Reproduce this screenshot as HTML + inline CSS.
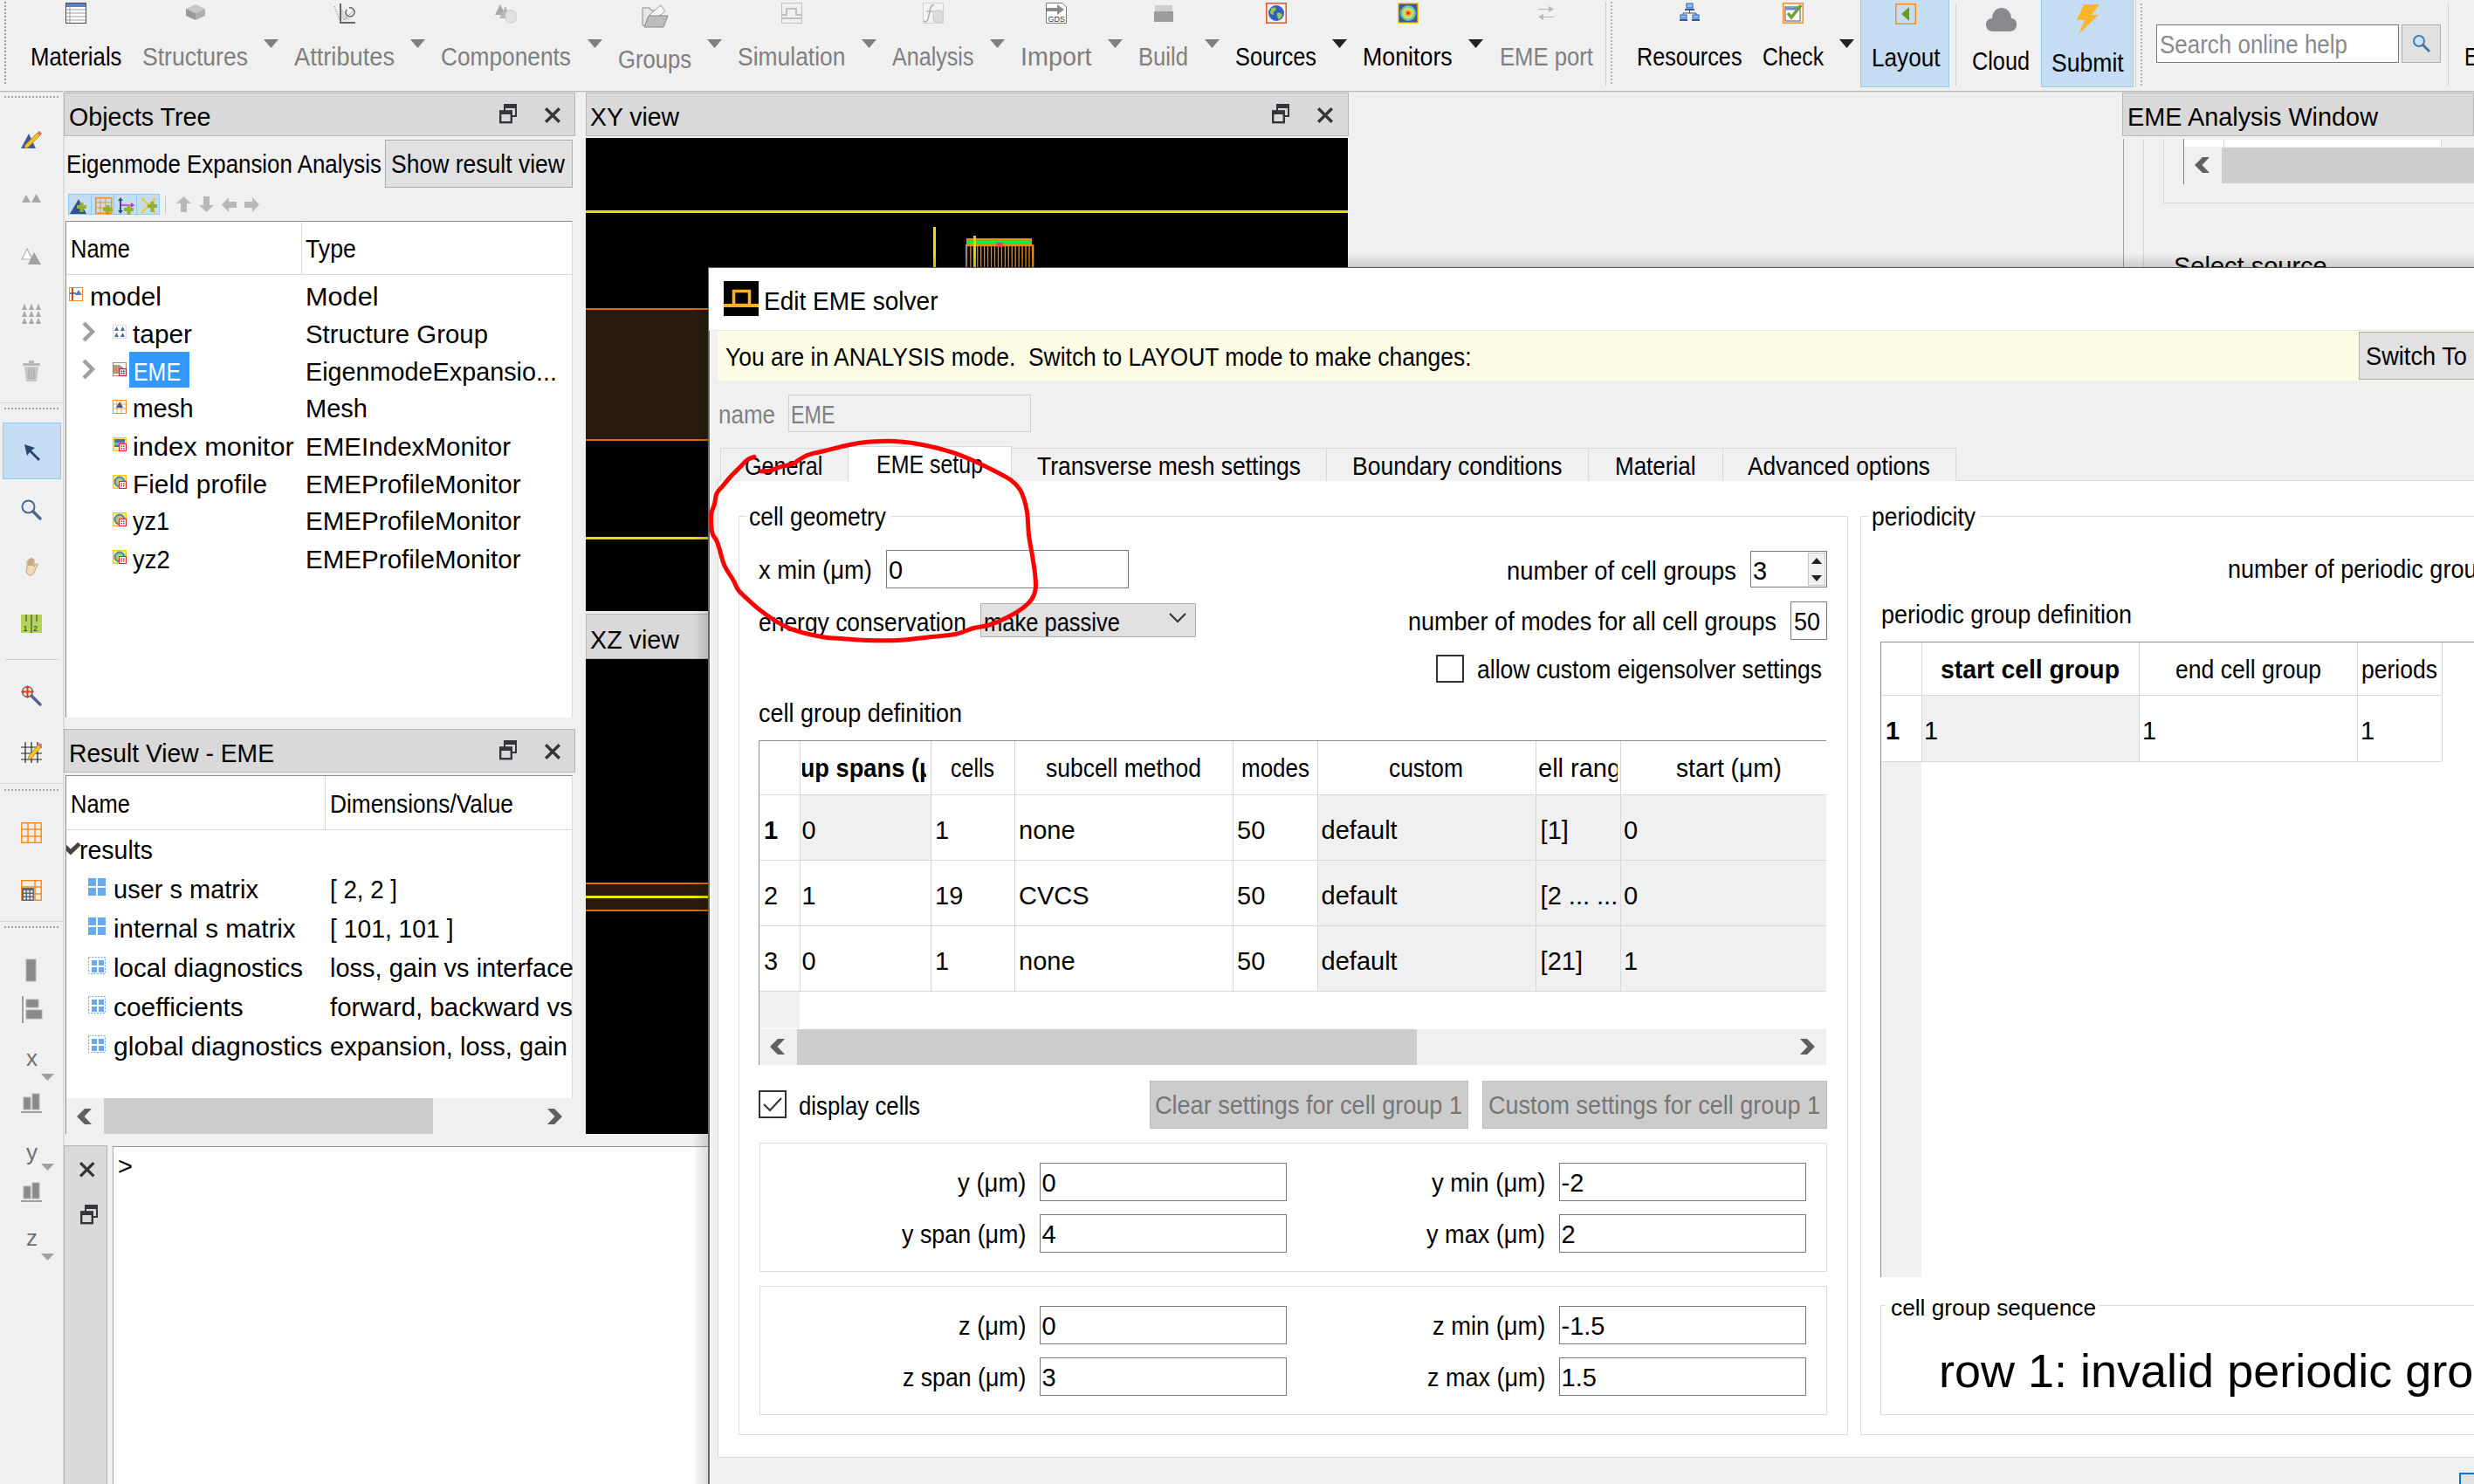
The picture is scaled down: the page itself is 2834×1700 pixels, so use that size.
<!DOCTYPE html>
<html><head><meta charset="utf-8"><title>Edit EME solver</title>
<style>
html,body{margin:0;padding:0;width:2834px;height:1700px;overflow:hidden;background:#f0f0f0;font-family:'Liberation Sans', sans-serif;}
.t{position:absolute;white-space:pre;line-height:1;transform-origin:0 0;}
div{box-sizing:border-box;}
svg{position:absolute;overflow:visible;}
</style></head><body>
<div style="position:absolute;left:0px;top:104px;width:2834px;height:1px;background:#b8b8b8"></div>
<div style="position:absolute;left:0px;top:105px;width:2834px;height:1px;background:#e0e0e0"></div>
<div style="position:absolute;left:5px;top:2px;width:2px;height:96px;background:repeating-linear-gradient(#a0a0a0 0 2px,transparent 2px 4px)"></div>
<div style="position:absolute;left:2131px;top:0px;width:102px;height:100px;background:#c4ddf2;border:1px solid #99c8f0;border-top:none"></div>
<div style="position:absolute;left:2338px;top:0px;width:106px;height:100px;background:#c4ddf2;border:1px solid #99c8f0;border-top:none"></div>
<div class="t" style="left:35.0px;top:50.9px;font-size:29px;color:#000;transform:scaleX(0.8882);">Materials</div>
<div class="t" style="left:163.0px;top:50.9px;font-size:29px;color:#7f7f7f;transform:scaleX(0.9155);">Structures</div>
<div class="t" style="left:337.0px;top:50.9px;font-size:29px;color:#7f7f7f;transform:scaleX(0.9388);">Attributes</div>
<div class="t" style="left:505.0px;top:50.9px;font-size:29px;color:#7f7f7f;transform:scaleX(0.9061);">Components</div>
<div class="t" style="left:707.5px;top:53.9px;font-size:29px;color:#7f7f7f;transform:scaleX(0.8832);">Groups</div>
<div class="t" style="left:845.0px;top:50.9px;font-size:29px;color:#7f7f7f;transform:scaleX(0.9121);">Simulation</div>
<div class="t" style="left:1022.0px;top:50.9px;font-size:29px;color:#7f7f7f;transform:scaleX(0.8657);">Analysis</div>
<div class="t" style="left:1169.0px;top:50.9px;font-size:29px;color:#7f7f7f;transform:scaleX(0.9916);">Import</div>
<div class="t" style="left:1304.0px;top:50.9px;font-size:29px;color:#7f7f7f;transform:scaleX(0.8837);">Build</div>
<div class="t" style="left:1414.6px;top:50.9px;font-size:29px;color:#000;transform:scaleX(0.8741);">Sources</div>
<div class="t" style="left:1561.0px;top:50.9px;font-size:29px;color:#000;transform:scaleX(0.9235);">Monitors</div>
<div class="t" style="left:1718.0px;top:50.9px;font-size:29px;color:#7f7f7f;transform:scaleX(0.8852);">EME port</div>
<div class="t" style="left:1874.5px;top:50.9px;font-size:29px;color:#000;transform:scaleX(0.8693);">Resources</div>
<div class="t" style="left:2019.0px;top:50.9px;font-size:29px;color:#000;transform:scaleX(0.8515);">Check</div>
<div class="t" style="left:2143.5px;top:51.9px;font-size:29px;color:#000;transform:scaleX(0.9015);">Layout</div>
<div class="t" style="left:2259.0px;top:56.4px;font-size:29px;color:#000;transform:scaleX(0.8709);">Cloud</div>
<div class="t" style="left:2350.0px;top:58.4px;font-size:29px;color:#000;transform:scaleX(0.9162);">Submit</div>
<div class="t" style="left:2823.0px;top:50.9px;font-size:29px;color:#000;transform:scaleX(0.8271);">E</div>
<svg style="left:302px;top:45px" width="17" height="10"><path d="M0 0H17L8.5 10Z" fill="#7f7f7f"/></svg>
<svg style="left:470px;top:45px" width="17" height="10"><path d="M0 0H17L8.5 10Z" fill="#7f7f7f"/></svg>
<svg style="left:672.6px;top:45px" width="17" height="10"><path d="M0 0H17L8.5 10Z" fill="#7f7f7f"/></svg>
<svg style="left:810px;top:45px" width="17" height="10"><path d="M0 0H17L8.5 10Z" fill="#7f7f7f"/></svg>
<svg style="left:987px;top:45px" width="17" height="10"><path d="M0 0H17L8.5 10Z" fill="#7f7f7f"/></svg>
<svg style="left:1134px;top:45px" width="17" height="10"><path d="M0 0H17L8.5 10Z" fill="#7f7f7f"/></svg>
<svg style="left:1269px;top:45px" width="17" height="10"><path d="M0 0H17L8.5 10Z" fill="#7f7f7f"/></svg>
<svg style="left:1380px;top:45px" width="17" height="10"><path d="M0 0H17L8.5 10Z" fill="#7f7f7f"/></svg>
<svg style="left:1525.6px;top:45px" width="17" height="10"><path d="M0 0H17L8.5 10Z" fill="#222"/></svg>
<svg style="left:1682px;top:45px" width="17" height="10"><path d="M0 0H17L8.5 10Z" fill="#222"/></svg>
<svg style="left:2106.6px;top:45px" width="17" height="10"><path d="M0 0H17L8.5 10Z" fill="#222"/></svg>
<div style="position:absolute;left:1839px;top:2px;width:1px;height:96px;background:#d0d0d0"></div>
<div style="position:absolute;left:1845px;top:2px;width:2px;height:96px;background:repeating-linear-gradient(#b0b0b0 0 2px,transparent 2px 4px)"></div>
<div style="position:absolute;left:2240px;top:4px;width:1px;height:94px;background:#d0d0d0"></div>
<div style="position:absolute;left:2446px;top:0px;width:1px;height:100px;background:#d0d0d0"></div>
<div style="position:absolute;left:2452px;top:4px;width:2px;height:94px;background:repeating-linear-gradient(#b0b0b0 0 2px,transparent 2px 4px)"></div>
<div style="position:absolute;left:2804px;top:4px;width:1px;height:94px;background:#d0d0d0"></div>
<div style="position:absolute;left:2470px;top:28px;width:278px;height:44px;background:#fff;border:1px solid #7a7a7a"></div>
<div class="t" style="left:2474.0px;top:37.4px;font-size:29px;color:#8a8a8a;transform:scaleX(0.8950);">Search online help</div>
<div style="position:absolute;left:2751px;top:28px;width:45px;height:44px;background:#e1e1e1;border:1px solid #adadad"></div>
<svg style="left:2762px;top:38px" width="24" height="24"><circle cx="9" cy="9" r="6" fill="#cfe3f7" stroke="#4a78b0" stroke-width="2"/><path d="M13 13L21 21" stroke="#4a6fa0" stroke-width="3"/></svg>
<div style="position:absolute;left:72px;top:104px;width:2px;height:1596px;background:#dcdcdc"></div>
<div style="position:absolute;left:73px;top:106px;width:586px;height:50px;background:#d9d9d9;border:1px solid #b8b8b8"></div>
<div class="t" style="left:79.0px;top:119.8px;font-size:29px;color:#000;transform:scaleX(0.9884);">Objects Tree</div>
<svg style="left:572px;top:119px" width="21" height="23"><rect x="6" y="1" width="13" height="13" fill="none" stroke="#333538" stroke-width="2"/><rect x="5" y="0" width="15" height="5" fill="#333538"/><rect x="1.2" y="8.6" width="12.6" height="12.6" fill="#dadada" stroke="#333538" stroke-width="2.4"/><rect x="0" y="7.4" width="15" height="4.6" fill="#333538"/></svg>
<svg style="left:622.5px;top:121.5px" width="20" height="20"><path d="M2.2 2.2L17.8 17.8M17.8 2.2L2.2 17.8" stroke="#333538" stroke-width="3.40"/></svg>
<div class="t" style="left:76.0px;top:173.8px;font-size:29px;color:#000;transform:scaleX(0.8921);">Eigenmode Expansion Analysis</div>
<div style="position:absolute;left:441px;top:160px;width:215px;height:55px;background:#e1e1e1;border:1px solid #adadad"></div>
<div class="t" style="left:448.0px;top:173.8px;font-size:29px;color:#000;transform:scaleX(0.9145);">Show result view</div>
<div style="position:absolute;left:75px;top:253px;width:581px;height:569px;background:#fff;border-left:1px solid #8e8e8e;border-top:1px solid #8e8e8e;border-right:1px solid #dcdcdc"></div>
<div style="position:absolute;left:76px;top:314px;width:580px;height:1px;background:#d8d8d8"></div>
<div style="position:absolute;left:345px;top:254px;width:1px;height:60px;background:#d8d8d8"></div>
<div class="t" style="left:81.0px;top:270.9px;font-size:29px;color:#000;transform:scaleX(0.8790);">Name</div>
<div class="t" style="left:350.0px;top:270.9px;font-size:29px;color:#000;transform:scaleX(0.9225);">Type</div>
<div style="position:absolute;left:148px;top:403px;width:69px;height:41px;background:#3399ff"></div>
<div class="t" style="left:102.6px;top:326.4px;font-size:29px;color:#000;transform:scaleX(1.0380);">model</div>
<div class="t" style="left:350.0px;top:326.4px;font-size:29px;color:#000;transform:scaleX(1.0570);">Model</div>
<div class="t" style="left:151.6px;top:369.1px;font-size:29px;color:#000;transform:scaleX(1.0286);">taper</div>
<div class="t" style="left:350.0px;top:369.1px;font-size:29px;color:#000;transform:scaleX(1.0129);">Structure Group</div>
<div class="t" style="left:153.2px;top:411.9px;font-size:29px;color:#fff;transform:scaleX(0.8593);">EME</div>
<div class="t" style="left:350.0px;top:411.9px;font-size:29px;color:#000;transform:scaleX(0.9925);">EigenmodeExpansio...</div>
<div class="t" style="left:152.0px;top:454.4px;font-size:29px;color:#000;transform:scaleX(0.9814);">mesh</div>
<div class="t" style="left:350.0px;top:454.4px;font-size:29px;color:#000;">Mesh</div>
<div class="t" style="left:152.0px;top:497.9px;font-size:29px;color:#000;transform:scaleX(1.0615);">index monitor</div>
<div class="t" style="left:350.0px;top:497.9px;font-size:29px;color:#000;transform:scaleX(1.0195);">EMEIndexMonitor</div>
<div class="t" style="left:152.0px;top:540.9px;font-size:29px;color:#000;transform:scaleX(1.0273);">Field profile</div>
<div class="t" style="left:350.0px;top:540.9px;font-size:29px;color:#000;transform:scaleX(1.0196);">EMEProfileMonitor</div>
<div class="t" style="left:152.0px;top:583.4px;font-size:29px;color:#000;transform:scaleX(0.9304);">yz1</div>
<div class="t" style="left:350.0px;top:583.4px;font-size:29px;color:#000;transform:scaleX(1.0196);">EMEProfileMonitor</div>
<div class="t" style="left:152.0px;top:626.5px;font-size:29px;color:#000;transform:scaleX(0.9459);">yz2</div>
<div class="t" style="left:350.0px;top:626.5px;font-size:29px;color:#000;transform:scaleX(1.0196);">EMEProfileMonitor</div>
<div style="position:absolute;left:73px;top:835px;width:586px;height:50px;background:#d9d9d9;border:1px solid #b8b8b8"></div>
<div class="t" style="left:79.0px;top:848.9px;font-size:29px;color:#000;transform:scaleX(0.9742);">Result View - EME</div>
<svg style="left:572px;top:848px" width="21" height="23"><rect x="6" y="1" width="13" height="13" fill="none" stroke="#333538" stroke-width="2"/><rect x="5" y="0" width="15" height="5" fill="#333538"/><rect x="1.2" y="8.6" width="12.6" height="12.6" fill="#dadada" stroke="#333538" stroke-width="2.4"/><rect x="0" y="7.4" width="15" height="4.6" fill="#333538"/></svg>
<svg style="left:623px;top:851px" width="20" height="20"><path d="M2.2 2.2L17.8 17.8M17.8 2.2L2.2 17.8" stroke="#333538" stroke-width="3.40"/></svg>
<div style="position:absolute;left:75px;top:888px;width:581px;height:411px;background:#fff;border-left:1px solid #8e8e8e;border-top:1px solid #8e8e8e;border-right:1px solid #dcdcdc"></div>
<div style="position:absolute;left:76px;top:950px;width:580px;height:1px;background:#d8d8d8"></div>
<div style="position:absolute;left:372px;top:889px;width:1px;height:61px;background:#d8d8d8"></div>
<div class="t" style="left:81.0px;top:906.9px;font-size:29px;color:#000;transform:scaleX(0.8790);">Name</div>
<div class="t" style="left:378.0px;top:906.9px;font-size:29px;color:#000;transform:scaleX(0.9068);">Dimensions/Value</div>
<div class="t" style="left:91.0px;top:959.9px;font-size:29px;color:#000;transform:scaleX(0.9834);">results</div>
<svg style="left:76px;top:963px;overflow:hidden" width="19" height="20"><path d="M-5 3.5L4.9 13L15 3.5" fill="none" stroke="#444" stroke-width="5"/></svg>
<div class="t" style="left:130.0px;top:1004.9px;font-size:29px;color:#000;">user s matrix</div>
<div style="position:absolute;left:372px;top:988px;width:284px;height:60px;overflow:hidden"><div style="position:absolute;left:-372px;top:-988px"><div class="t" style="left:378.0px;top:1004.9px;font-size:29px;color:#000;transform:scaleX(0.9552);">[ 2, 2 ]</div></div></div>
<div class="t" style="left:130.0px;top:1049.8px;font-size:29px;color:#000;transform:scaleX(1.0192);">internal s matrix</div>
<div style="position:absolute;left:372px;top:1033px;width:284px;height:60px;overflow:hidden"><div style="position:absolute;left:-372px;top:-1033px"><div class="t" style="left:378.0px;top:1049.8px;font-size:29px;color:#000;transform:scaleX(0.9750);">[ 101, 101 ]</div></div></div>
<div class="t" style="left:130.0px;top:1094.8px;font-size:29px;color:#000;transform:scaleX(1.0198);">local diagnostics</div>
<div style="position:absolute;left:372px;top:1078px;width:284px;height:60px;overflow:hidden"><div style="position:absolute;left:-372px;top:-1078px"><div class="t" style="left:378.0px;top:1094.8px;font-size:29px;color:#000;">loss, gain vs interface</div></div></div>
<div class="t" style="left:130.0px;top:1139.8px;font-size:29px;color:#000;transform:scaleX(1.0294);">coefficients</div>
<div style="position:absolute;left:372px;top:1123px;width:284px;height:60px;overflow:hidden"><div style="position:absolute;left:-372px;top:-1123px"><div class="t" style="left:378.0px;top:1139.8px;font-size:29px;color:#000;transform:scaleX(1.0146);">forward, backward vs</div></div></div>
<div class="t" style="left:130.0px;top:1184.8px;font-size:29px;color:#000;transform:scaleX(1.0384);">global diagnostics</div>
<div style="position:absolute;left:372px;top:1168px;width:284px;height:60px;overflow:hidden"><div style="position:absolute;left:-372px;top:-1168px"><div class="t" style="left:378.0px;top:1184.8px;font-size:29px;color:#000;transform:scaleX(1.0043);">expansion, loss, gain</div></div></div>
<div style="position:absolute;left:76px;top:1258px;width:580px;height:41px;background:#f0f0f0"></div>
<div style="position:absolute;left:119px;top:1258px;width:377px;height:41px;background:#cdcdcd"></div>
<svg style="left:88px;top:1270px" width="17" height="18"><path d="M17 0H9L0 9L9 18H17L8.5 9Z" fill="#606060"/></svg>
<svg style="left:627px;top:1270px" width="17" height="18"><path d="M0 0H8L17 9L8 18H0L8.5 9Z" fill="#606060"/></svg>
<div style="position:absolute;left:73px;top:1312px;width:50px;height:388px;background:#dadada;border:1px solid #b4b4b4;border-bottom:none"></div>
<svg style="left:89.5px;top:1329.5px" width="19.5" height="19.5"><path d="M2.145 2.145L17.355 17.355M17.355 2.145L2.145 17.355" stroke="#333538" stroke-width="3.32"/></svg>
<svg style="left:92px;top:1380px" width="21" height="23"><rect x="6" y="1" width="13" height="13" fill="none" stroke="#333538" stroke-width="2"/><rect x="5" y="0" width="15" height="5" fill="#333538"/><rect x="1.2" y="8.6" width="12.6" height="12.6" fill="#dadada" stroke="#333538" stroke-width="2.4"/><rect x="0" y="7.4" width="15" height="4.6" fill="#333538"/></svg>
<div style="position:absolute;left:129px;top:1313px;width:684px;height:387px;background:#fff;border-left:1px solid #a8a8a8;border-top:1px solid #959595"></div>
<div class="t" style="left:135.0px;top:1321.8px;font-size:29px;color:#000;">&gt;</div>
<div style="position:absolute;left:671px;top:106px;width:874px;height:50px;background:#d9d9d9;border:1px solid #b8b8b8"></div>
<div class="t" style="left:676.0px;top:119.8px;font-size:29px;color:#000;transform:scaleX(0.9786);">XY view</div>
<svg style="left:1457px;top:119px" width="21" height="23"><rect x="6" y="1" width="13" height="13" fill="none" stroke="#333538" stroke-width="2"/><rect x="5" y="0" width="15" height="5" fill="#333538"/><rect x="1.2" y="8.6" width="12.6" height="12.6" fill="#dadada" stroke="#333538" stroke-width="2.4"/><rect x="0" y="7.4" width="15" height="4.6" fill="#333538"/></svg>
<svg style="left:1507.5px;top:121.5px" width="20" height="20"><path d="M2.2 2.2L17.8 17.8M17.8 2.2L2.2 17.8" stroke="#333538" stroke-width="3.40"/></svg>
<div style="position:absolute;left:671px;top:158px;width:873px;height:542px;background:#000"></div>
<div style="position:absolute;left:671px;top:241px;width:873px;height:3px;background:#e8e000"></div>
<div style="position:absolute;left:671px;top:353px;width:142px;height:152px;background:#2a1b0e;border-top:2px solid #e0700e;border-bottom:2px solid #e0700e"></div>
<div style="position:absolute;left:671px;top:615px;width:142px;height:3px;background:#e8e000"></div>
<div style="position:absolute;left:1069px;top:260px;width:3px;height:47px;background:#e8e000"></div>
<svg style="left:1105px;top:272px" width="80" height="35"><rect x="2" y="1" width="75" height="2" fill="#ff8800"/><rect x="2" y="3" width="75" height="5" fill="#00f040"/><rect x="2" y="8" width="76" height="2.2" fill="#ff8800"/><rect x="6.20" y="10" width="1.3" height="25" fill="#ff8800"/><rect x="10.15" y="10" width="1.3" height="25" fill="#ff8800"/><rect x="14.10" y="10" width="1.3" height="25" fill="#ff8800"/><rect x="18.05" y="10" width="1.3" height="25" fill="#ff8800"/><rect x="22.00" y="10" width="1.3" height="25" fill="#ff8800"/><rect x="25.95" y="10" width="1.3" height="25" fill="#ff8800"/><rect x="29.90" y="10" width="1.3" height="25" fill="#ff8800"/><rect x="33.85" y="10" width="1.3" height="25" fill="#ff8800"/><rect x="37.80" y="10" width="1.3" height="25" fill="#ff8800"/><rect x="41.75" y="10" width="1.3" height="25" fill="#ff8800"/><rect x="45.70" y="10" width="1.3" height="25" fill="#ff8800"/><rect x="49.65" y="10" width="1.3" height="25" fill="#ff8800"/><rect x="53.60" y="10" width="1.3" height="25" fill="#ff8800"/><rect x="57.55" y="10" width="1.3" height="25" fill="#ff8800"/><rect x="61.50" y="10" width="1.3" height="25" fill="#ff8800"/><rect x="65.45" y="10" width="1.3" height="25" fill="#ff8800"/><rect x="69.40" y="10" width="1.3" height="25" fill="#ff8800"/><rect x="73.35" y="10" width="1.3" height="25" fill="#ff8800"/><rect x="77.30" y="10" width="1.3" height="25" fill="#ff8800"/><rect x="1.3" y="8" width="1" height="27" fill="#c0c8e8"/><rect x="78.3" y="8" width="1" height="27" fill="#c0c8e8"/><rect x="2.2" y="10" width="1" height="25" fill="#ff8800"/><rect x="77.2" y="10" width="1" height="25" fill="#ff8800"/><rect x="10.2" y="-2" width="2.7" height="37" fill="#e8e000"/><rect x="36.3" y="6.2" width="7.5" height="4.5" fill="#ff4050"/></svg>
<div style="position:absolute;left:671px;top:703px;width:142px;height:52px;background:#d9d9d9;border:1px solid #b8b8b8"></div>
<div class="t" style="left:676.0px;top:718.9px;font-size:29px;color:#000;transform:scaleX(0.9889);">XZ view</div>
<div style="position:absolute;left:671px;top:755px;width:142px;height:544px;background:#000"></div>
<div style="position:absolute;left:671px;top:1011px;width:142px;height:33px;background:#2a1b0e;border-top:2px solid #e0700e;border-bottom:2px solid #e0700e"></div>
<div style="position:absolute;left:671px;top:1026px;width:142px;height:3px;background:#f0e800"></div>
<div style="position:absolute;left:2431px;top:106px;width:403px;height:50px;background:#d9d9d9;border:1px solid #b8b8b8"></div>
<div class="t" style="left:2437.0px;top:119.8px;font-size:29px;color:#000;transform:scaleX(0.9948);">EME Analysis Window</div>
<div style="position:absolute;left:2432px;top:159px;width:402px;height:148px;border-left:1px solid #a0a0a0"></div>
<div style="position:absolute;left:2455px;top:159px;width:1px;height:148px;background:#d8d8d8"></div>
<div style="position:absolute;left:2478px;top:159px;width:356px;height:74px;border-left:1px solid #d8d8d8;border-bottom:1px solid #d8d8d8"></div>
<div style="position:absolute;left:2501px;top:159px;width:1px;height:52px;background:#808080"></div>
<div style="position:absolute;left:2502px;top:160px;width:295px;height:8px;background:#fff;border-right:1px solid #d8d8d8"></div>
<div style="position:absolute;left:2547px;top:160px;width:1px;height:8px;background:#d8d8d8"></div>
<div style="position:absolute;left:2545px;top:169px;width:289px;height:41px;background:#cdcdcd"></div>
<svg style="left:2514px;top:180px" width="17" height="18"><path d="M17 0H9L0 9L9 18H17L8.5 9Z" fill="#606060"/></svg>
<div style="position:absolute;left:2455px;top:280px;width:379px;height:26px;overflow:hidden"><div style="position:absolute;left:-2455px;top:-280px"><div class="t" style="left:2490.0px;top:290.9px;font-size:29px;color:#000;">Select source</div></div></div>
<div style="position:absolute;left:794px;top:290px;width:17px;height:1410px;background:linear-gradient(90deg, rgba(0,0,0,0), rgba(0,0,0,0.15))"></div>
<div style="position:absolute;left:811px;top:290px;width:2023px;height:16px;background:linear-gradient(rgba(0,0,0,0), rgba(0,0,0,0.15))"></div>
<div style="position:absolute;left:811px;top:306px;width:2023px;height:1394px;background:#f0f0f0;border-left:2px solid #666;border-top:1px solid #555"></div>
<div style="position:absolute;left:813px;top:307px;width:1px;height:1393px;background:#fff"></div>
<div style="position:absolute;left:812px;top:307px;width:2022px;height:71px;background:#fff"></div>
<div style="position:absolute;left:812px;top:378px;width:2022px;height:1px;background:#e6e6e6"></div>
<svg style="left:829px;top:322px" width="40" height="40"><rect width="40" height="40" fill="#000"/><rect x="11.5" y="11.5" width="18" height="16" fill="none" stroke="#ffb21c" stroke-width="3.5"/><rect x="0" y="26" width="40" height="4" fill="#ffb21c"/></svg>
<div class="t" style="left:875.0px;top:330.9px;font-size:29px;color:#000;transform:scaleX(0.9671);">Edit EME solver</div>
<div style="position:absolute;left:822px;top:379px;width:2012px;height:57px;background:#fdfde6"></div>
<div class="t" style="left:831.0px;top:394.9px;font-size:29px;color:#000;transform:scaleX(0.9119);">You are in ANALYSIS mode.  Switch to LAYOUT mode to make changes:</div>
<div style="position:absolute;left:2702px;top:380px;width:140px;height:55px;background:#e1e1e1;border:1px solid #adadad"></div>
<div class="t" style="left:2710.0px;top:393.9px;font-size:29px;color:#000;transform:scaleX(0.9387);">Switch To</div>
<div class="t" style="left:823.0px;top:460.5px;font-size:29px;color:#808080;transform:scaleX(0.8960);">name</div>
<div style="position:absolute;left:903px;top:452px;width:278px;height:43px;background:#f0f0f0;border:1px solid #cfcfcf"></div>
<div class="t" style="left:906.0px;top:460.5px;font-size:29px;color:#808080;transform:scaleX(0.8020);">EME</div>
<div style="position:absolute;left:822px;top:550px;width:2012px;height:1120px;background:#fff;border:1px solid #d9d9d9;border-right:none"></div>
<div style="position:absolute;left:825px;top:513px;width:147px;height:38px;background:#f0f0f0;border:1px solid #d9d9d9;border-bottom:none"></div>
<div class="t" style="left:853.3px;top:520.2px;font-size:29px;color:#000;transform:scaleX(0.8665);">General</div>
<div style="position:absolute;left:1158px;top:513px;width:362px;height:38px;background:#f0f0f0;border:1px solid #d9d9d9;border-bottom:none"></div>
<div class="t" style="left:1187.5px;top:520.2px;font-size:29px;color:#000;transform:scaleX(0.9126);">Transverse mesh settings</div>
<div style="position:absolute;left:1519px;top:513px;width:301px;height:38px;background:#f0f0f0;border:1px solid #d9d9d9;border-bottom:none"></div>
<div class="t" style="left:1548.8px;top:520.2px;font-size:29px;color:#000;transform:scaleX(0.9152);">Boundary conditions</div>
<div style="position:absolute;left:1819px;top:513px;width:155px;height:38px;background:#f0f0f0;border:1px solid #d9d9d9;border-bottom:none"></div>
<div class="t" style="left:1849.8px;top:520.2px;font-size:29px;color:#000;transform:scaleX(0.8967);">Material</div>
<div style="position:absolute;left:1973px;top:513px;width:268px;height:38px;background:#f0f0f0;border:1px solid #d9d9d9;border-bottom:none"></div>
<div class="t" style="left:2002.0px;top:520.2px;font-size:29px;color:#000;transform:scaleX(0.9065);">Advanced options</div>
<div style="position:absolute;left:971px;top:511px;width:188px;height:41px;background:#fff;border:1px solid #d9d9d9;border-bottom:none"></div>
<div class="t" style="left:1004.0px;top:517.6px;font-size:29px;color:#000;transform:scaleX(0.8601);">EME setup</div>
<div style="position:absolute;left:846px;top:591px;width:1271px;height:1053px;border:1px solid #dcdcdc"></div>
<div style="position:absolute;left:855px;top:580px;width:166px;height:20px;background:#fff"></div>
<div class="t" style="left:858.0px;top:577.9px;font-size:29px;color:#000;transform:scaleX(0.9103);">cell geometry</div>
<div class="t" style="left:869.0px;top:638.9px;font-size:29px;color:#000;transform:scaleX(0.9452);">x min (μm)</div>
<div style="position:absolute;left:1015px;top:630px;width:278px;height:44px;background:#fff;border:1px solid #7a7a7a"></div>
<div class="t" style="left:1018.0px;top:638.9px;font-size:29px;color:#000;">0</div>
<div class="t" style="left:1726.0px;top:639.9px;font-size:29px;color:#000;transform:scaleX(0.9431);">number of cell groups</div>
<div style="position:absolute;left:2005px;top:631px;width:88px;height:42px;background:#fff;border:1px solid #7a7a7a"></div>
<div class="t" style="left:2008.0px;top:639.9px;font-size:29px;color:#000;">3</div>
<div style="position:absolute;left:2071px;top:633px;width:20px;height:38px;background:#f0f0f0;border:1px solid #c8c8c8"></div>
<svg style="left:2074px;top:638px" width="14" height="30"><path d="M1 8L7 1L13 8Z M1 21L13 21L7 28Z" fill="#222"/></svg>
<div class="t" style="left:869.0px;top:698.9px;font-size:29px;color:#000;transform:scaleX(0.9113);">energy conservation</div>
<div style="position:absolute;left:1123px;top:691px;width:247px;height:39px;background:#e1e1e1;border:1px solid #adadad"></div>
<div class="t" style="left:1127.0px;top:698.9px;font-size:29px;color:#000;transform:scaleX(0.8798);">make passive</div>
<svg style="left:1339px;top:702px" width="20" height="12"><path d="M1 1L10 10L19 1" fill="none" stroke="#333" stroke-width="2"/></svg>
<div class="t" style="left:1613.0px;top:697.9px;font-size:29px;color:#000;transform:scaleX(0.9317);">number of modes for all cell groups</div>
<div style="position:absolute;left:2051px;top:689px;width:42px;height:44px;background:#fff;border:1px solid #7a7a7a"></div>
<div class="t" style="left:2055.0px;top:697.9px;font-size:29px;color:#000;transform:scaleX(0.9298);">50</div>
<div style="position:absolute;left:1645px;top:750px;width:32px;height:32px;background:#fff;border:2px solid #333"></div>
<div class="t" style="left:1692.0px;top:752.9px;font-size:29px;color:#000;transform:scaleX(0.9144);">allow custom eigensolver settings</div>
<div class="t" style="left:869.0px;top:802.9px;font-size:29px;color:#000;transform:scaleX(0.9324);">cell group definition</div>
<div style="position:absolute;left:869px;top:848px;width:1223px;height:372px;background:#fff;border-left:1px solid #8e8e8e;border-top:1px solid #8e8e8e"></div>
<div style="position:absolute;left:916px;top:910px;width:150px;height:75px;background:#f0f0f0"></div>
<div style="position:absolute;left:1509px;top:910px;width:583px;height:225px;background:#f0f0f0"></div>
<div style="position:absolute;left:870px;top:1135px;width:46px;height:43px;background:#f0f0f0"></div>
<div style="position:absolute;left:870px;top:910px;width:1222px;height:1px;background:#d8d8d8"></div>
<div style="position:absolute;left:870px;top:985px;width:1222px;height:1px;background:#d8d8d8"></div>
<div style="position:absolute;left:870px;top:1060px;width:1222px;height:1px;background:#d8d8d8"></div>
<div style="position:absolute;left:870px;top:1135px;width:1222px;height:1px;background:#d8d8d8"></div>
<div style="position:absolute;left:915.5px;top:849px;width:1px;height:286px;background:#d8d8d8"></div>
<div style="position:absolute;left:1065.5px;top:849px;width:1px;height:286px;background:#d8d8d8"></div>
<div style="position:absolute;left:1162px;top:849px;width:1px;height:286px;background:#d8d8d8"></div>
<div style="position:absolute;left:1412px;top:849px;width:1px;height:286px;background:#d8d8d8"></div>
<div style="position:absolute;left:1509px;top:849px;width:1px;height:286px;background:#d8d8d8"></div>
<div style="position:absolute;left:1759px;top:849px;width:1px;height:286px;background:#d8d8d8"></div>
<div style="position:absolute;left:1856px;top:849px;width:1px;height:286px;background:#d8d8d8"></div>
<div style="position:absolute;left:919px;top:860px;width:142px;height:45px;overflow:hidden"><div style="position:absolute;left:-919px;top:-860px"><div class="t" style="left:899.5px;top:866.4px;font-size:29px;color:#000;font-weight:bold;transform:scaleX(0.9402);">oup spans (μm)</div></div></div>
<div class="t" style="left:1088.7px;top:866.4px;font-size:29px;color:#000;transform:scaleX(0.8618);">cells</div>
<div class="t" style="left:1198.0px;top:866.4px;font-size:29px;color:#000;transform:scaleX(0.9125);">subcell method</div>
<div class="t" style="left:1421.5px;top:866.4px;font-size:29px;color:#000;transform:scaleX(0.8961);">modes</div>
<div class="t" style="left:1590.5px;top:866.4px;font-size:29px;color:#000;transform:scaleX(0.9092);">custom</div>
<div style="position:absolute;left:1760px;top:860px;width:93px;height:45px;overflow:hidden"><div style="position:absolute;left:-1760px;top:-860px"><div class="t" style="left:1762.0px;top:866.4px;font-size:29px;color:#000;">ell range</div></div></div>
<div class="t" style="left:1919.5px;top:866.4px;font-size:29px;color:#000;transform:scaleX(0.9708);">start (μm)</div>
<div class="t" style="left:875.0px;top:936.9px;font-size:29px;color:#000;font-weight:bold;">1</div>
<div class="t" style="left:918.6px;top:936.9px;font-size:29px;color:#000;">0</div>
<div class="t" style="left:1071.0px;top:936.9px;font-size:29px;color:#000;">1</div>
<div class="t" style="left:1167.0px;top:936.9px;font-size:29px;color:#000;">none</div>
<div class="t" style="left:1417.0px;top:936.9px;font-size:29px;color:#000;">50</div>
<div class="t" style="left:1513.6px;top:936.9px;font-size:29px;color:#000;">default</div>
<div class="t" style="left:1764.6px;top:936.9px;font-size:29px;color:#000;">[1]</div>
<div class="t" style="left:1860.0px;top:936.9px;font-size:29px;color:#000;">0</div>
<div class="t" style="left:875.0px;top:1011.9px;font-size:29px;color:#000;">2</div>
<div class="t" style="left:918.6px;top:1011.9px;font-size:29px;color:#000;">1</div>
<div class="t" style="left:1071.0px;top:1011.9px;font-size:29px;color:#000;">19</div>
<div class="t" style="left:1167.0px;top:1011.9px;font-size:29px;color:#000;">CVCS</div>
<div class="t" style="left:1417.0px;top:1011.9px;font-size:29px;color:#000;">50</div>
<div class="t" style="left:1513.6px;top:1011.9px;font-size:29px;color:#000;">default</div>
<div class="t" style="left:1764.6px;top:1011.9px;font-size:29px;color:#000;">[2 ... ...</div>
<div class="t" style="left:1860.0px;top:1011.9px;font-size:29px;color:#000;">0</div>
<div class="t" style="left:875.0px;top:1086.8px;font-size:29px;color:#000;">3</div>
<div class="t" style="left:918.6px;top:1086.8px;font-size:29px;color:#000;">0</div>
<div class="t" style="left:1071.0px;top:1086.8px;font-size:29px;color:#000;">1</div>
<div class="t" style="left:1167.0px;top:1086.8px;font-size:29px;color:#000;">none</div>
<div class="t" style="left:1417.0px;top:1086.8px;font-size:29px;color:#000;">50</div>
<div class="t" style="left:1513.6px;top:1086.8px;font-size:29px;color:#000;">default</div>
<div class="t" style="left:1764.6px;top:1086.8px;font-size:29px;color:#000;">[21]</div>
<div class="t" style="left:1860.0px;top:1086.8px;font-size:29px;color:#000;">1</div>
<div style="position:absolute;left:870px;top:1178px;width:1222px;height:42px;background:#f0f0f0"></div>
<div style="position:absolute;left:913px;top:1178px;width:710px;height:42px;background:#cdcdcd"></div>
<svg style="left:882px;top:1190px" width="17" height="18"><path d="M17 0H9L0 9L9 18H17L8.5 9Z" fill="#606060"/></svg>
<svg style="left:2062px;top:1190px" width="17" height="18"><path d="M0 0H8L17 9L8 18H0L8.5 9Z" fill="#606060"/></svg>
<div style="position:absolute;left:870px;top:1178px;width:1222px;height:1px;background:#fff"></div>
<div style="position:absolute;left:869px;top:1249px;width:32px;height:32px;background:#fff;border:2px solid #333"></div>
<svg style="left:873px;top:1255px" width="24" height="20"><path d="M2 10L9 17L22 3" fill="none" stroke="#333" stroke-width="2"/></svg>
<div class="t" style="left:915.0px;top:1252.8px;font-size:29px;color:#000;transform:scaleX(0.8891);">display cells</div>
<div style="position:absolute;left:1317px;top:1238px;width:365px;height:55px;background:#cccccc;border:1px solid #bdbdbd"></div>
<div class="t" style="left:1323.0px;top:1252.3px;font-size:29px;color:#767676;transform:scaleX(0.9332);">Clear settings for cell group 1</div>
<div style="position:absolute;left:1698px;top:1238px;width:395px;height:55px;background:#cccccc;border:1px solid #bdbdbd"></div>
<div class="t" style="left:1705.0px;top:1252.3px;font-size:29px;color:#767676;transform:scaleX(0.9318);">Custom settings for cell group 1</div>
<div style="position:absolute;left:870px;top:1309px;width:1223px;height:148px;border:1px solid #dcdcdc"></div>
<div style="position:absolute;left:870px;top:1473px;width:1223px;height:148px;border:1px solid #dcdcdc"></div>
<div class="t" style="left:1096.8px;top:1341.3px;font-size:29px;color:#000;transform:scaleX(0.9486);">y (μm)</div>
<div style="position:absolute;left:1191px;top:1332px;width:283px;height:44px;background:#fff;border:1px solid #7a7a7a"></div>
<div class="t" style="left:1193.5px;top:1341.3px;font-size:29px;color:#000;">0</div>
<div class="t" style="left:1032.9px;top:1400.3px;font-size:29px;color:#000;transform:scaleX(0.9266);">y span (μm)</div>
<div style="position:absolute;left:1191px;top:1391px;width:283px;height:44px;background:#fff;border:1px solid #7a7a7a"></div>
<div class="t" style="left:1193.5px;top:1400.3px;font-size:29px;color:#000;">4</div>
<div class="t" style="left:1097.8px;top:1505.3px;font-size:29px;color:#000;transform:scaleX(0.9366);">z (μm)</div>
<div style="position:absolute;left:1191px;top:1496px;width:283px;height:44px;background:#fff;border:1px solid #7a7a7a"></div>
<div class="t" style="left:1193.5px;top:1505.3px;font-size:29px;color:#000;">0</div>
<div class="t" style="left:1033.8px;top:1564.3px;font-size:29px;color:#000;transform:scaleX(0.9207);">z span (μm)</div>
<div style="position:absolute;left:1191px;top:1555px;width:283px;height:44px;background:#fff;border:1px solid #7a7a7a"></div>
<div class="t" style="left:1193.5px;top:1564.3px;font-size:29px;color:#000;">3</div>
<div class="t" style="left:1639.8px;top:1341.3px;font-size:29px;color:#000;transform:scaleX(0.9474);">y min (μm)</div>
<div style="position:absolute;left:1786px;top:1332px;width:283px;height:44px;background:#fff;border:1px solid #7a7a7a"></div>
<div class="t" style="left:1788.5px;top:1341.3px;font-size:29px;color:#000;">-2</div>
<div class="t" style="left:1634.1px;top:1400.3px;font-size:29px;color:#000;transform:scaleX(0.9341);">y max (μm)</div>
<div style="position:absolute;left:1786px;top:1391px;width:283px;height:44px;background:#fff;border:1px solid #7a7a7a"></div>
<div class="t" style="left:1788.5px;top:1400.3px;font-size:29px;color:#000;">2</div>
<div class="t" style="left:1640.8px;top:1505.3px;font-size:29px;color:#000;transform:scaleX(0.9401);">z min (μm)</div>
<div style="position:absolute;left:1786px;top:1496px;width:283px;height:44px;background:#fff;border:1px solid #7a7a7a"></div>
<div class="t" style="left:1788.5px;top:1505.3px;font-size:29px;color:#000;">-1.5</div>
<div class="t" style="left:1634.7px;top:1564.3px;font-size:29px;color:#000;transform:scaleX(0.9300);">z max (μm)</div>
<div style="position:absolute;left:1786px;top:1555px;width:283px;height:44px;background:#fff;border:1px solid #7a7a7a"></div>
<div class="t" style="left:1788.5px;top:1564.3px;font-size:29px;color:#000;">1.5</div>
<div style="position:absolute;left:2131px;top:591px;width:720px;height:1053px;border:1px solid #dcdcdc"></div>
<div style="position:absolute;left:2140px;top:580px;width:128px;height:20px;background:#fff"></div>
<div class="t" style="left:2144.0px;top:577.9px;font-size:29px;color:#000;transform:scaleX(0.9114);">periodicity</div>
<div class="t" style="left:2552.0px;top:637.9px;font-size:29px;color:#000;transform:scaleX(0.9320);">number of periodic groups</div>
<div class="t" style="left:2155.0px;top:689.9px;font-size:29px;color:#000;transform:scaleX(0.9320);">periodic group definition</div>
<div style="position:absolute;left:2154px;top:735px;width:700px;height:728px;background:#fff;border-left:1px solid #8e8e8e;border-top:1px solid #8e8e8e"></div>
<div style="position:absolute;left:2155px;top:873px;width:46px;height:590px;background:#f0f0f0"></div>
<div style="position:absolute;left:2201px;top:797px;width:249px;height:75px;background:#f0f0f0"></div>
<div style="position:absolute;left:2155px;top:796px;width:642px;height:1px;background:#d8d8d8"></div>
<div style="position:absolute;left:2155px;top:872px;width:642px;height:1px;background:#d8d8d8"></div>
<div style="position:absolute;left:2200.5px;top:736px;width:1px;height:136px;background:#d8d8d8"></div>
<div style="position:absolute;left:2450px;top:736px;width:1px;height:136px;background:#d8d8d8"></div>
<div style="position:absolute;left:2700px;top:736px;width:1px;height:136px;background:#d8d8d8"></div>
<div style="position:absolute;left:2797px;top:736px;width:1px;height:136px;background:#d8d8d8"></div>
<div class="t" style="left:2222.5px;top:752.9px;font-size:29px;color:#000;font-weight:bold;transform:scaleX(0.9785);">start cell group</div>
<div class="t" style="left:2491.5px;top:752.9px;font-size:29px;color:#000;transform:scaleX(0.9166);">end cell group</div>
<div class="t" style="left:2705.0px;top:752.9px;font-size:29px;color:#000;transform:scaleX(0.9146);">periods</div>
<div class="t" style="left:2160.0px;top:822.9px;font-size:29px;color:#000;font-weight:bold;">1</div>
<div class="t" style="left:2204.0px;top:822.9px;font-size:29px;color:#000;">1</div>
<div class="t" style="left:2454.0px;top:822.9px;font-size:29px;color:#000;">1</div>
<div class="t" style="left:2704.0px;top:822.9px;font-size:29px;color:#000;">1</div>
<div style="position:absolute;left:2154px;top:1495px;width:700px;height:126px;border:1px solid #dcdcdc"></div>
<div style="position:absolute;left:2160px;top:1485px;width:244px;height:20px;background:#fff"></div>
<div class="t" style="left:2165.8px;top:1485.0px;font-size:26px;color:#000;transform:scaleX(1.0098);">cell group sequence</div>
<div class="t" style="left:2221.0px;top:1542.6px;font-size:54px;color:#000;">row 1: invalid periodic group</div>
<div style="position:absolute;left:2817px;top:1687px;width:30px;height:30px;background:#e1e1e1;border:2px solid #0078d7"></div>
<svg style="left:75px;top:3px" width="24" height="24" viewBox="0 0 24 24"><rect x="0.5" y="0.5" width="23" height="23" fill="#fff" stroke="#4a4a55"/><rect x="1" y="1" width="22" height="4" fill="#5b82c8"/><line x1="1" y1="8" x2="23" y2="8" stroke="#9a9aa8"/><line x1="1" y1="12" x2="23" y2="12" stroke="#9a9aa8"/><line x1="1" y1="16" x2="23" y2="16" stroke="#9a9aa8"/><line x1="1" y1="20" x2="23" y2="20" stroke="#9a9aa8"/><line x1="5" y1="5" x2="5" y2="23" stroke="#9a9aa8"/></svg>
<svg style="left:212px;top:4px" width="24" height="20" viewBox="0 0 24 20"><path d="M1 6L12 1L23 6L12 11Z" fill="#c8c8c8"/><path d="M1 6L12 11V19L1 14Z" fill="#9a9a9a"/><path d="M12 11L23 6V14L12 19Z" fill="#b0b0b0"/></svg>
<svg style="left:382px;top:3px" width="26" height="24" viewBox="0 0 26 24"><path d="M8 1V23H25" fill="none" stroke="#666" stroke-width="2"/><path d="M1 4L8 22" stroke="#888" stroke-dasharray="1.5 1.5"/><path d="M9 6L20 20H9Z" fill="#d8d8d8"/><path d="M18 6A5 5 0 1 1 15 8" fill="none" stroke="#666" stroke-width="1.5"/><path d="M12 20L24 8" stroke="#777" stroke-dasharray="1.5 1.5"/></svg>
<svg style="left:567px;top:3px" width="26" height="24" viewBox="0 0 26 24"><path d="M0 14L6 2L12 14Z" fill="#a8a8a8"/><path d="M5 18L12 4L18 18Z" fill="#b8b8b8"/><rect x="12" y="9" width="12" height="14" rx="5" fill="#e2e2e2" stroke="#c8c8c8"/></svg>
<svg style="left:735px;top:5px" width="31" height="27" viewBox="0 0 31 27"><path d="M1 4H9L11 7H22V24H1Z" fill="#e6e6e6" stroke="#888"/><path d="M9 12L22 1L27 8L14 18Z" fill="#f6f6f6" stroke="#999"/><path d="M3 26L8 13H30L25 26Z" fill="#bdbdbd" stroke="#888"/></svg>
<svg style="left:895px;top:3px" width="24" height="24" viewBox="0 0 24 24"><rect x="0.5" y="0.5" width="23" height="23" fill="none" stroke="#c0c0c0"/><path d="M1 14H6V7H17V14H23" fill="none" stroke="#c0c0c0" stroke-width="2"/><rect x="1" y="17" width="22" height="2" fill="#c0c0c0"/></svg>
<svg style="left:1057px;top:3px" width="24" height="24" viewBox="0 0 24 24"><rect x="0.5" y="0.5" width="23" height="23" fill="#f4f4f4" stroke="#d0d0d0"/><path d="M13 3C10 2 9 5 8 10L6 19C5 22 3 22 1 21" fill="none" stroke="#b0b0b0" stroke-width="1.6"/><path d="M4 10H12" stroke="#b0b0b0" stroke-width="1.3"/><rect x="12" y="9" width="11" height="14" rx="4" fill="#dcdcdc" stroke="#c8c8c8"/></svg>
<svg style="left:1198px;top:3px" width="24" height="24" viewBox="0 0 24 24"><path d="M0.5 0.5H19L23.5 5V23.5H0.5Z" fill="#fff" stroke="#777"/><path d="M1 6H13V2L21 8L13 14V10H1Z" fill="#8a8a8a"/><text x="2.5" y="21.5" font-family="Liberation Sans" font-size="9" fill="#333">GDS</text></svg>
<svg style="left:1322px;top:6px" width="22" height="19" viewBox="0 0 22 19"><rect x="1" y="0" width="20" height="7" fill="#cfcfcf"/><rect x="0" y="7" width="22" height="12" fill="#9c9c9c"/></svg>
<svg style="left:1450px;top:3px" width="24" height="24" viewBox="0 0 24 24"><rect x="0.75" y="0.75" width="22.5" height="22.5" fill="#f2f2f2" stroke="#e2552a" stroke-width="1.5"/><circle cx="12" cy="12" r="9" fill="#2f62b8"/><path d="M6 7C8 5 11 5 12 7C11 10 9 9 9 12C9 15 7 14 5 12Z M13 12C15 11 18 12 19 14C18 17 16 19 14 19C14 16 12 15 13 12Z" fill="#9cc850"/></svg>
<svg style="left:1601px;top:3px" width="24" height="24" viewBox="0 0 24 24"><rect x="0.75" y="0.75" width="22.5" height="22.5" fill="#3d55a0" stroke="#ffd000" stroke-width="1.5"/><circle cx="12" cy="12" r="9" fill="#66c8a8"/><circle cx="12" cy="12" r="6.5" fill="#c8e070"/><circle cx="12" cy="12" r="4" fill="#f8b040"/><circle cx="12" cy="12" r="2" fill="#e83018"/></svg>
<svg style="left:1761px;top:6px" width="20" height="18" viewBox="0 0 20 18"><path d="M1 4H13V1L19 4.5L13 8V5H1Z M19 13H7V10L1 13.5L7 17V14H19Z" fill="#b8b8b8"/></svg>
<svg style="left:1924px;top:4px" width="23" height="20" viewBox="0 0 23 20"><rect x="8" y="0" width="7" height="5" fill="#8fc0f0" stroke="#2a5aa8"/><rect x="6" y="6" width="11" height="2" fill="#2a5aa8"/><path d="M11.5 8V11M4 14V11H19V14" fill="none" stroke="#555"/><rect x="1" y="13" width="7" height="4" fill="#8fc0f0" stroke="#2a5aa8"/><rect x="15" y="13" width="7" height="4" fill="#8fc0f0" stroke="#2a5aa8"/><rect x="0" y="18" width="9" height="2" fill="#2a5aa8"/><rect x="14" y="18" width="9" height="2" fill="#2a5aa8"/></svg>
<svg style="left:2042px;top:3px" width="24" height="24" viewBox="0 0 24 24"><rect x="0.75" y="0.75" width="22.5" height="22.5" fill="#f4f4f4" stroke="#ff8c1a" stroke-width="1.5"/><rect x="3" y="5" width="17" height="16" fill="#fff" stroke="#555"/><rect x="3.5" y="5.5" width="16" height="3" fill="#6a8ad0"/><path d="M6 12L10 17L21 3" fill="none" stroke="#6aa030" stroke-width="3.5"/></svg>
<svg style="left:2171px;top:4px" width="24" height="24" viewBox="0 0 24 24"><rect x="0.75" y="0.75" width="22.5" height="22.5" fill="none" stroke="#ff8c1a" stroke-width="1.5"/><path d="M7 12L16 4V20Z" fill="#6c9a2a"/></svg>
<svg style="left:2275px;top:7px" width="36" height="30" viewBox="0 0 36 30"><path d="M8 29C2 29 0 25 0 21C0 17 3 14 7 14C7 7 12 2 18 2C24 2 29 7 29 14C33 14 35 17 35 21C35 25 33 29 27 29Z" fill="#8a8a8e"/></svg>
<svg style="left:2377px;top:5px" width="28" height="35" viewBox="0 0 28 35"><path d="M10 0H28L19 12H27L4 34L11 18H2Z" fill="#fbb52b"/></svg>
<div style="position:absolute;left:5px;top:110px;width:63px;height:2px;background:repeating-linear-gradient(90deg,#a8a8a8 0 2px,transparent 2px 4px)"></div>
<svg style="left:24px;top:150px" width="24" height="21" viewBox="0 0 24 21"><path d="M0 20L9 3L17 20Z" fill="#3a5c9a"/><path d="M5 16L19 2L22 5L8 19L4 20Z" fill="#f5c020" stroke="#b08010" stroke-width="0.8"/><path d="M19 2L21 0L24 3L22 5Z" fill="#e06080"/></svg>
<svg style="left:25px;top:222px" width="22" height="10" viewBox="0 0 22 10"><path d="M0 10L5 1L10 10Z M11 10L16.5 0L22 10Z" fill="#a8a8a8"/></svg>
<svg style="left:24px;top:283px" width="24" height="20" viewBox="0 0 24 20"><path d="M1 14L7 2L13 14Z" fill="#fff" stroke="#b0b0b0" stroke-width="1.2"/><path d="M8 20L15 6L23 20Z" fill="#a0a0a0"/></svg>
<svg style="left:24px;top:347px" width="24" height="24" viewBox="0 0 24 24"><path d="M1 8L4 1L7 8Z" fill="#a8a8a8"/><path d="M9 8L12 1L15 8Z" fill="#a8a8a8"/><path d="M17 8L20 1L23 8Z" fill="#a8a8a8"/><path d="M1 16L4 9L7 16Z" fill="#a8a8a8"/><path d="M9 16L12 9L15 16Z" fill="#a8a8a8"/><path d="M17 16L20 9L23 16Z" fill="#a8a8a8"/><path d="M1 24L4 17L7 24Z" fill="#a8a8a8"/><path d="M9 24L12 17L15 24Z" fill="#a8a8a8"/><path d="M17 24L20 17L23 24Z" fill="#a8a8a8"/></svg>
<svg style="left:25px;top:413px" width="22" height="24" viewBox="0 0 22 24"><rect x="1" y="3" width="20" height="3" rx="1" fill="#b8b8b8"/><rect x="8" y="0" width="6" height="3" fill="#b8b8b8"/><path d="M3 7H19L17 24H5Z" fill="#c4c4c4"/><path d="M8 9V21M11 9V21M14 9V21" stroke="#a8a8a8" stroke-width="1.2"/></svg>
<div style="position:absolute;left:0px;top:461px;width:72px;height:1px;background:#d8d8d8"></div>
<div style="position:absolute;left:5px;top:467px;width:63px;height:2px;background:repeating-linear-gradient(90deg,#a8a8a8 0 2px,transparent 2px 4px)"></div>
<div style="position:absolute;left:3px;top:484px;width:67px;height:65px;background:#c4ddf3;border:1px solid #90c8f6"></div>
<svg style="left:27px;top:508px" width="20" height="20" viewBox="0 0 20 20"><path d="M1 1L13 5L9 8L19 18L17 20L7 10L4 14Z" fill="#2c4470"/></svg>
<svg style="left:24px;top:572px" width="24" height="23" viewBox="0 0 24 23"><circle cx="8.5" cy="8.5" r="7" fill="#e8eef8" stroke="#4a6890" stroke-width="2"/><path d="M14 14L22 22" stroke="#4a6890" stroke-width="3.5" stroke-linecap="round"/></svg>
<svg style="left:28px;top:638px" width="17" height="22" viewBox="0 0 17 22"><path d="M3 12V5C3 4 5 4 5 5V10V3C5 2 7 2 7 3V10V2C7 1 9 1 9 2V10V3C9 2 11 2 11 3V11L13 8C14 7 16 8 15 9L12 16C11 19 9 21 7 21C4 21 2 19 2 16Z" fill="#f0d8b8" stroke="#b09070" stroke-width="0.8"/></svg>
<svg style="left:24px;top:704px" width="24" height="21" viewBox="0 0 24 21"><rect width="24" height="21" fill="#b4d45a"/><path d="M6 0V8M12 0V21M18 0V8" stroke="#333" stroke-width="1"/><text x="2.5" y="19" font-family="Liberation Sans" font-size="9" fill="#333">1</text><text x="14" y="19" font-family="Liberation Sans" font-size="9" fill="#333">2</text></svg>
<div style="position:absolute;left:6px;top:755px;width:61px;height:1px;background:#d0d0d0"></div>
<svg style="left:24px;top:785px" width="24" height="23" viewBox="0 0 24 23"><circle cx="7.5" cy="7.5" r="6" fill="#dfe6f0" stroke="#6a7890" stroke-width="1.5"/><path d="M12 12L22 22" stroke="#4a6890" stroke-width="3.5" stroke-linecap="round"/><path d="M7.5 0L10 3H5Z M7.5 15L10 12H5Z M0 7.5L3 5V10Z M15 7.5L12 5V10Z M6.5 3H8.5V12H6.5Z M3 6.5H12V8.5H3Z" fill="#e0401a"/></svg>
<svg style="left:24px;top:850px" width="24" height="24" viewBox="0 0 24 24"><path d="M0 6H24M0 13H24M0 20H24M5 0V24M12 0V24M19 0V24" stroke="#222" stroke-width="1.2"/><path d="M9 16L20 3L23 6L12 19L8 20Z" fill="#f5c020" stroke="#a08020" stroke-width="0.8"/><path d="M20 3L22 1L24 3L23 6Z" fill="#e06080"/></svg>
<div style="position:absolute;left:0px;top:897px;width:72px;height:1px;background:#d8d8d8"></div>
<div style="position:absolute;left:5px;top:904px;width:63px;height:2px;background:repeating-linear-gradient(90deg,#a8a8a8 0 2px,transparent 2px 4px)"></div>
<svg style="left:24px;top:942px" width="24" height="24" viewBox="0 0 24 24"><rect x="0.75" y="0.75" width="22.5" height="22.5" fill="none" stroke="#ff8c1a" stroke-width="1.5"/><path d="M8 1V23M16 1V23M1 8H23M1 16H23" stroke="#ff8c1a" stroke-width="1.5"/></svg>
<svg style="left:24px;top:1008px" width="24" height="24" viewBox="0 0 24 24"><rect x="0.75" y="0.75" width="22.5" height="22.5" fill="none" stroke="#ff8c1a" stroke-width="1.5"/><path d="M16 1V23M1 8H23M1 16H23" stroke="#ff8c1a" stroke-width="1.5"/><rect x="1" y="9" width="14" height="15" rx="1" fill="#606878"/><rect x="3" y="12" width="2.5" height="2.5" fill="#e8e8e8"/><rect x="7" y="12" width="2.5" height="2.5" fill="#e8e8e8"/><rect x="11" y="12" width="2.5" height="2.5" fill="#e8e8e8"/><rect x="3" y="16" width="2.5" height="2.5" fill="#e8e8e8"/><rect x="7" y="16" width="2.5" height="2.5" fill="#e8e8e8"/><rect x="11" y="16" width="2.5" height="2.5" fill="#e8e8e8"/><rect x="3" y="20" width="2.5" height="2.5" fill="#e8e8e8"/><rect x="7" y="20" width="2.5" height="2.5" fill="#e8e8e8"/><rect x="11" y="20" width="2.5" height="2.5" fill="#e8e8e8"/></svg>
<div style="position:absolute;left:0px;top:1055px;width:72px;height:1px;background:#d8d8d8"></div>
<div style="position:absolute;left:5px;top:1061px;width:63px;height:2px;background:repeating-linear-gradient(90deg,#a8a8a8 0 2px,transparent 2px 4px)"></div>
<svg style="left:30px;top:1099px" width="11" height="25" viewBox="0 0 11 25"><rect x="0" y="0" width="11" height="25" fill="#8a8a8a" stroke="#b0b0b0"/></svg>
<svg style="left:25px;top:1141px" width="23" height="31" viewBox="0 0 23 31"><rect x="0" y="0" width="2" height="31" fill="#a0a0a0"/><rect x="5" y="4" width="14" height="9" fill="#8a8a8a" stroke="#b0b0b0"/><rect x="5" y="16" width="18" height="10" fill="#8a8a8a" stroke="#b0b0b0"/></svg>
<div class="t" style="left:30.0px;top:1198.9px;font-size:26px;color:#707070;">x</div>
<svg style="left:47px;top:1230px" width="15" height="8" viewBox="0 0 15 8"><path d="M0 0H15L7.5 8Z" fill="#a0a0a0"/></svg>
<div class="t" style="left:30.0px;top:1307.0px;font-size:26px;color:#707070;">y</div>
<svg style="left:47px;top:1332.5px" width="15" height="8" viewBox="0 0 15 8"><path d="M0 0H15L7.5 8Z" fill="#a0a0a0"/></svg>
<div class="t" style="left:30.0px;top:1405.3px;font-size:26px;color:#707070;">z</div>
<svg style="left:47px;top:1435.6px" width="15" height="8" viewBox="0 0 15 8"><path d="M0 0H15L7.5 8Z" fill="#a0a0a0"/></svg>
<svg style="left:24px;top:1252.6px" width="24" height="23" viewBox="0 0 24 23"><rect x="3" y="4" width="8" height="14" fill="#8a8a8a" stroke="#b0b0b0"/><rect x="13" y="0" width="8" height="18" fill="#8a8a8a" stroke="#b0b0b0"/><rect x="0" y="20" width="24" height="2" fill="#a0a0a0"/></svg>
<svg style="left:24px;top:1355px" width="24" height="23" viewBox="0 0 24 23"><rect x="3" y="4" width="8" height="14" fill="#8a8a8a" stroke="#b0b0b0"/><rect x="13" y="0" width="8" height="18" fill="#8a8a8a" stroke="#b0b0b0"/><rect x="0" y="20" width="24" height="2" fill="#a0a0a0"/></svg>
<div style="position:absolute;left:78px;top:222px;width:105px;height:24px;background:#c4ddf3;border:1px solid #90c8f6"></div>
<div style="position:absolute;left:104px;top:223px;width:1px;height:22px;background:#90c8f6"></div>
<div style="position:absolute;left:130px;top:223px;width:1px;height:22px;background:#90c8f6"></div>
<div style="position:absolute;left:156px;top:223px;width:1px;height:22px;background:#90c8f6"></div>
<svg style="left:80px;top:226px" width="22" height="19" viewBox="0 0 22 19"><path d="M0 19L10 2L19 19Z" fill="#34508a"/><path d="M8 11H19M13.5 6V17" stroke="#94b030" stroke-width="4"/></svg>
<svg style="left:109px;top:226px" width="20" height="19" viewBox="0 0 20 19"><rect x="0.75" y="0.75" width="18" height="17.5" fill="none" stroke="#ff8c1a" stroke-width="1.5"/><path d="M6 1V18M12 1V18M1 6H19M1 12H19" stroke="#ff8c1a" stroke-width="1"/><path d="M9 14H20M14.5 9V20" stroke="#94b030" stroke-width="4"/></svg>
<svg style="left:135px;top:226px" width="20" height="19" viewBox="0 0 20 19"><path d="M3 1V18" stroke="#34508a" stroke-width="2"/><path d="M0 4L3 0L6 4Z M0 15L3 19L6 15Z" fill="#34508a"/><path d="M4 9H16" stroke="#d020e0" stroke-width="1.5"/><path d="M15 6L19 9L15 12Z" fill="#d020e0"/><path d="M7 14H18M12.5 9V20" stroke="#94b030" stroke-width="4"/></svg>
<svg style="left:161px;top:226px" width="20" height="19" viewBox="0 0 20 19"><path d="M1 1L10 9L1 18M17 1L10 9L17 18" fill="none" stroke="#f0c820" stroke-width="2"/><path d="M8 10H19M13.5 5V17" stroke="#94b030" stroke-width="4"/></svg>
<div style="position:absolute;left:189px;top:225px;width:1px;height:20px;background:#c8c8c8"></div>
<svg style="left:202px;top:225px" width="17" height="18" viewBox="0 0 17 18"><path d="M8.5 0L17 8H12V18H5V8H0Z" fill="#b8b8b8"/></svg>
<svg style="left:228px;top:225px" width="17" height="18" viewBox="0 0 17 18"><path d="M8.5 18L17 10H12V0H5V10H0Z" fill="#b8b8b8"/></svg>
<svg style="left:254px;top:226px" width="17" height="17" viewBox="0 0 17 17"><path d="M0 8.5L8 0V5H17V12H8V17Z" fill="#b8b8b8"/></svg>
<svg style="left:280px;top:226px" width="17" height="17" viewBox="0 0 17 17"><path d="M17 8.5L9 0V5H0V12H9V17Z" fill="#b8b8b8"/></svg>
<svg style="left:79px;top:329px" width="16" height="16" viewBox="0 0 16 16"><rect x="0.5" y="0.5" width="15" height="15" fill="#fff" stroke="#ff8c1a"/><path d="M4 1V15" stroke="#e04010" stroke-width="2"/><path d="M1 7H8" stroke="#2a5a90" stroke-width="1.5"/><path d="M7 9L11 3L15 9Z" fill="#5a7ab8"/></svg>
<svg style="left:94px;top:368px" width="15" height="24" viewBox="0 0 15 24"><path d="M2 2L12 12L2 22" fill="none" stroke="#a0a0a0" stroke-width="4.5"/></svg>
<svg style="left:94px;top:411px" width="15" height="24" viewBox="0 0 15 24"><path d="M2 2L12 12L2 22" fill="none" stroke="#a0a0a0" stroke-width="4.5"/></svg>
<svg style="left:129px;top:372px" width="16" height="16" viewBox="0 0 16 16"><rect x="0.5" y="0.5" width="15" height="15" fill="#fff" stroke="#c8c8d0" stroke-dasharray="1.5 1"/><path d="M2 7L4.5 2L7 7Z M9 7L11.5 2L14 7Z M2 14L4.5 9L7 14Z M9 14L11.5 9L14 14Z" fill="#4a6aa0"/></svg>
<svg style="left:129px;top:415px" width="16" height="16" viewBox="0 0 16 16"><rect x="0.5" y="0.5" width="15" height="15" fill="#fff" stroke="#b08868"/><path d="M1 3H8L12 6V13H1Z" fill="#b89878"/><rect x="7.5" y="7.5" width="8" height="8" fill="#d0e4f0" stroke="#b02040"/><path d="M9.5 9.5h1.5v1.5h-1.5z M12 9.5h1.5v1.5h-1.5z M9.5 12h1.5v1.5h-1.5z M12 12h1.5v1.5h-1.5z" fill="#b02040"/></svg>
<svg style="left:129px;top:458px" width="16" height="16" viewBox="0 0 16 16"><rect x="0.5" y="0.5" width="15" height="15" fill="#fff" stroke="#ff8c1a"/><path d="M5 1V15M10 1V15M1 5H15M1 10H15" stroke="#ff8c1a" stroke-width="0.8"/><path d="M4 9L8 2L12 9Z" fill="#3a5a98"/></svg>
<svg style="left:129px;top:501px" width="16" height="16" viewBox="0 0 16 16"><rect x="0.75" y="0.75" width="14.5" height="14.5" fill="#fff8c0" stroke="#f0d000" stroke-width="1.5"/><rect x="2" y="2" width="12" height="9" fill="#4a70b0"/><rect x="2" y="6" width="12" height="3" fill="#60c0c8"/><rect x="7.5" y="7.5" width="8" height="8" fill="#fff" stroke="#e02030"/><path d="M9.5 9.5h1.5v1.5h-1.5z M12 9.5h1.5v1.5h-1.5z M9.5 12h1.5v1.5h-1.5z M12 12h1.5v1.5h-1.5z" fill="#e02030"/></svg>
<svg style="left:129px;top:544px" width="16" height="16" viewBox="0 0 16 16"><rect x="0.75" y="0.75" width="14.5" height="14.5" fill="#fff8c0" stroke="#f0d000" stroke-width="1.5"/><circle cx="8" cy="8" r="6.5" fill="#5080c0"/><circle cx="8" cy="8" r="4.5" fill="#98d070"/><circle cx="8" cy="8" r="2" fill="#f0d040"/><rect x="7.5" y="7.5" width="8" height="8" fill="#fff" stroke="#e02030"/><path d="M9.5 9.5h1.5v1.5h-1.5z M12 9.5h1.5v1.5h-1.5z M9.5 12h1.5v1.5h-1.5z M12 12h1.5v1.5h-1.5z" fill="#e02030"/></svg>
<svg style="left:129px;top:587px" width="16" height="16" viewBox="0 0 16 16"><rect x="0.75" y="0.75" width="14.5" height="14.5" fill="#fff8c0" stroke="#f0d000" stroke-width="1.5"/><circle cx="8" cy="8" r="6.5" fill="#5080c0"/><circle cx="8" cy="8" r="4.5" fill="#98d070"/><circle cx="8" cy="8" r="2" fill="#f0d040"/><rect x="7.5" y="7.5" width="8" height="8" fill="#fff" stroke="#e02030"/><path d="M9.5 9.5h1.5v1.5h-1.5z M12 9.5h1.5v1.5h-1.5z M9.5 12h1.5v1.5h-1.5z M12 12h1.5v1.5h-1.5z" fill="#e02030"/></svg>
<svg style="left:129px;top:630px" width="16" height="16" viewBox="0 0 16 16"><rect x="0.75" y="0.75" width="14.5" height="14.5" fill="#fff8c0" stroke="#f0d000" stroke-width="1.5"/><circle cx="8" cy="8" r="6.5" fill="#5080c0"/><circle cx="8" cy="8" r="4.5" fill="#98d070"/><circle cx="8" cy="8" r="2" fill="#f0d040"/><rect x="7.5" y="7.5" width="8" height="8" fill="#fff" stroke="#e02030"/><path d="M9.5 9.5h1.5v1.5h-1.5z M12 9.5h1.5v1.5h-1.5z M9.5 12h1.5v1.5h-1.5z M12 12h1.5v1.5h-1.5z" fill="#e02030"/></svg>
<svg style="left:101px;top:1006px" width="20" height="20" viewBox="0 0 20 20"><rect x="0" y="0" width="9" height="9" fill="#6aa8f0"/><rect x="11" y="0" width="9" height="9" fill="#6aa8f0"/><rect x="0" y="11" width="9" height="9" fill="#6aa8f0"/><rect x="11" y="11" width="9" height="9" fill="#6aa8f0"/></svg>
<svg style="left:101px;top:1051px" width="20" height="20" viewBox="0 0 20 20"><rect x="0" y="0" width="9" height="9" fill="#6aa8f0"/><rect x="11" y="0" width="9" height="9" fill="#6aa8f0"/><rect x="0" y="11" width="9" height="9" fill="#6aa8f0"/><rect x="11" y="11" width="9" height="9" fill="#6aa8f0"/></svg>
<svg style="left:101px;top:1096px" width="20" height="20" viewBox="0 0 20 20"><rect x="0.5" y="0.5" width="19" height="19" fill="none" stroke="#6aa8f0" stroke-dasharray="2 1.5"/><rect x="4" y="4" width="6" height="6" fill="#6aa8f0"/><rect x="12" y="4" width="6" height="6" fill="#6aa8f0"/><rect x="4" y="12" width="6" height="6" fill="#6aa8f0"/><rect x="12" y="12" width="6" height="6" fill="#6aa8f0"/></svg>
<svg style="left:101px;top:1141px" width="20" height="20" viewBox="0 0 20 20"><rect x="0.5" y="0.5" width="19" height="19" fill="none" stroke="#6aa8f0" stroke-dasharray="2 1.5"/><rect x="4" y="4" width="6" height="6" fill="#6aa8f0"/><rect x="12" y="4" width="6" height="6" fill="#6aa8f0"/><rect x="4" y="12" width="6" height="6" fill="#6aa8f0"/><rect x="12" y="12" width="6" height="6" fill="#6aa8f0"/></svg>
<svg style="left:101px;top:1186px" width="20" height="20" viewBox="0 0 20 20"><rect x="0.5" y="0.5" width="19" height="19" fill="none" stroke="#6aa8f0" stroke-dasharray="2 1.5"/><rect x="4" y="4" width="6" height="6" fill="#6aa8f0"/><rect x="12" y="4" width="6" height="6" fill="#6aa8f0"/><rect x="4" y="12" width="6" height="6" fill="#6aa8f0"/><rect x="12" y="12" width="6" height="6" fill="#6aa8f0"/></svg>
<svg style="left:0;top:0" width="2834" height="1700"><path d="M871.8 539.9 C873.5 539.8 878.5 540.0 882.3 539.1 C886.1 538.2 890.2 536.0 894.6 534.7 C899.0 533.4 905.4 532.4 908.6 531.2 C911.8 530.0 911.6 529.2 913.9 527.7 C916.2 526.2 919.4 523.9 922.6 522.4 C925.8 520.9 929.4 519.9 933.2 518.9 C937.0 517.9 939.9 517.6 945.4 516.3 C950.9 515.0 960.0 512.5 966.4 511.0 C972.8 509.5 978.1 508.4 984.0 507.5 C989.9 506.6 994.8 506.2 1001.5 505.8 C1008.2 505.4 1017.0 505.1 1024.3 505.4 C1031.6 505.7 1037.4 506.3 1045.3 507.5 C1053.2 508.7 1062.8 510.6 1071.6 512.8 C1080.4 515.0 1089.2 517.5 1097.9 520.7 C1106.7 523.9 1116.8 528.6 1124.1 532.0 C1131.4 535.4 1136.2 537.9 1141.7 540.8 C1147.2 543.7 1153.0 546.4 1157.4 549.6 C1161.8 552.8 1165.3 556.3 1167.9 560.1 C1170.5 563.9 1171.7 567.6 1173.2 572.3 C1174.7 577.0 1175.8 581.4 1176.7 588.1 C1177.6 594.8 1177.6 605.0 1178.5 612.6 C1179.4 620.2 1180.8 626.4 1182.0 633.7 C1183.2 641.0 1184.8 649.7 1185.5 656.4 C1186.2 663.1 1186.9 669.0 1186.3 674.0 C1185.7 679.0 1184.5 682.4 1182.0 686.2 C1179.5 690.0 1176.1 693.2 1171.4 696.7 C1166.7 700.2 1160.3 704.1 1153.9 707.3 C1147.5 710.5 1139.3 714.0 1132.9 716.0 C1126.5 718.0 1121.8 717.8 1115.4 719.5 C1109.0 721.2 1103.1 724.8 1094.3 726.5 C1085.5 728.2 1073.9 728.8 1062.8 730.0 C1051.7 731.2 1039.5 732.9 1027.8 733.5 C1016.1 734.1 1002.9 733.8 992.7 733.5 C982.5 733.2 975.1 732.5 966.4 731.8 C957.6 731.1 949.8 731.0 940.2 729.2 C930.6 727.5 917.4 724.4 908.6 721.3 C899.8 718.2 894.0 714.6 887.6 710.8 C881.2 707.0 875.4 702.6 870.1 698.5 C864.9 694.4 860.2 690.0 856.1 686.2 C852.0 682.4 848.2 679.2 845.6 675.7 C843.0 672.2 842.9 669.9 840.3 665.2 C837.7 660.5 832.4 653.5 829.8 647.7 C827.2 641.9 826.0 634.9 824.5 630.2 C823.0 625.5 822.3 622.6 821.0 619.7 C819.7 616.8 817.6 615.2 816.6 612.6 C815.6 610.0 815.2 608.0 814.9 603.9 C814.6 599.8 814.3 592.5 814.9 588.1 C815.5 583.7 817.4 581.4 818.4 577.6 C819.4 573.8 819.4 568.8 821.0 565.3 C822.6 561.8 825.1 560.1 828.0 556.6 C830.9 553.1 835.3 547.8 838.5 544.3 C841.7 540.8 844.4 538.5 847.3 535.6 C850.2 532.7 853.3 528.8 856.1 526.8 C858.9 524.8 862.7 523.9 864.0 523.3" fill="none" stroke="#ff0000" stroke-width="5" stroke-linecap="round" stroke-linejoin="round"/></svg>
</body></html>
